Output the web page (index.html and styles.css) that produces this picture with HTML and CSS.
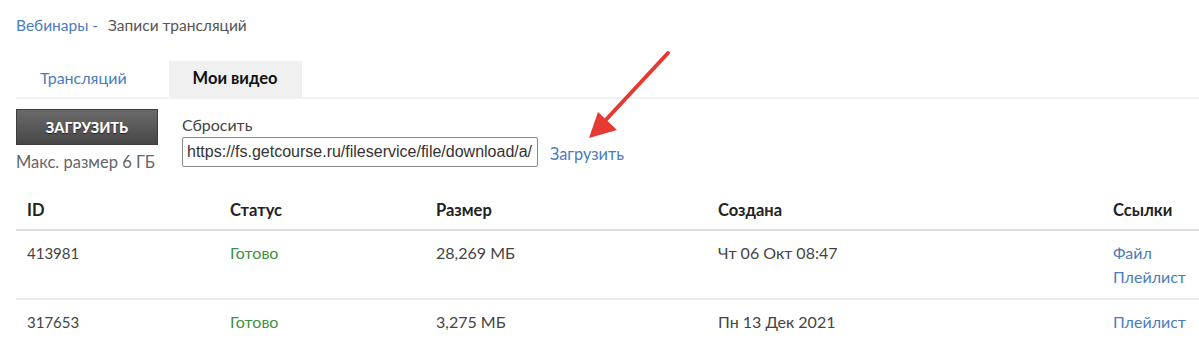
FILE: index.html
```html
<!DOCTYPE html>
<html lang="ru">
<head>
    <meta charset="utf-8">
    <title>Записи трансляций</title>
    <link rel="stylesheet" href="styles.css">
</head>
<body>
    <div class="page">
        <div class="breadcrumbs">
            <a href="#" class="crumb-link">Вебинары</a> <span class="crumb-sep">-</span>
            <span class="crumb-current">Записи трансляций</span>
        </div>

        <div class="tabs">
            <a href="#" class="tab">Трансляций</a>
            <a href="#" class="tab active">Мои видео</a>
        </div>

        <div class="upload-row">
            <div class="upload-box">
                <button class="btn-upload">Загрузить</button>
                <div class="hint">Макс. размер 6 ГБ</div>
            </div>
            <div class="url-box">
                <div class="reset">Сбросить</div>
                <div class="url-line">
                    <input type="text" class="url-input" value="https://fs.getcourse.ru/fileservice/file/download/a/123456/sc/480/h/9f2a1c">
                    <a href="#" class="url-submit">Загрузить</a>
                </div>
            </div>
            <svg class="arrow" width="100" height="100" viewBox="0 0 100 100">
                <line x1="88" y1="4" x2="22" y2="75" stroke="#e53a32" stroke-width="4" stroke-linecap="round"/>
                <polygon points="9,89 18,63 37,81" fill="#e53a32"/>
            </svg>
        </div>

        <table class="videos">
            <thead>
                <tr>
                    <th class="col-id">ID</th>
                    <th class="col-status">Статус</th>
                    <th class="col-size">Размер</th>
                    <th class="col-date">Создана</th>
                    <th class="col-links">Ссылки</th>
                </tr>
            </thead>
            <tbody>
                <tr>
                    <td class="num">413981</td>
                    <td class="ok">Готово</td>
                    <td>28,269 МБ</td>
                    <td>Чт 06 Окт 08:47</td>
                    <td><a href="#">Файл</a><br><a href="#">Плейлист</a></td>
                </tr>
                <tr>
                    <td class="num">317653</td>
                    <td class="ok">Готово</td>
                    <td>3,275 МБ</td>
                    <td>Пн 13 Дек 2021</td>
                    <td><a href="#">Плейлист</a></td>
                </tr>
            </tbody>
        </table>
    </div>
</body>
</html>
```

FILE: styles.css
```css
body {
    margin: 0;
    font-family: Lato, "Open Sans", sans-serif;
    font-size: 16px;
    color: #444;
    background: #fff;
}

a {
    color: #4a7cbd;
    text-decoration: none;
}

.page {
    padding: 14px 0 0 16px;
}

.breadcrumbs {
    height: 22px;
    line-height: 22px;
    font-size: 15.5px;
    color: #555;
}

.crumb-sep {
    color: #4a7cbd;
    margin-right: 6px;
}

.tabs {
    display: flex;
    margin-top: 25px;
    border-bottom: 2px solid #f2f2f2;
}

.tab {
    display: block;
    height: 36px;
    line-height: 34px;
    padding: 0 24px;
    margin-right: 18px;
}

.tab.active {
    background: #f0f0f0;
    color: #111;
    font-weight: bold;
    font-size: 16.5px;
    padding: 0 24px;
}

.upload-row {
    position: relative;
    display: flex;
    margin-top: 10px;
}

.upload-box {
    width: 166px;
}

.btn-upload {
    display: block;
    width: 142px;
    height: 36px;
    border: 1px solid #3c3c3c;
    background: linear-gradient(#6a6a6a, #474747);
    color: #fff;
    font-family: inherit;
    font-size: 14.5px;
    font-weight: 900;
    text-transform: uppercase;
    text-shadow: 0 1px 1px #222;
    padding: 0;
}

.hint {
    margin-top: 7px;
    color: #666;
    font-size: 16.5px;
}

.reset {
    line-height: 20px;
    margin-top: 6px;
}

.url-line {
    display: flex;
    align-items: center;
    margin-top: 2px;
}

.url-input {
    box-sizing: border-box;
    width: 356px;
    height: 30px;
    border: 1px solid #888;
    border-radius: 2px;
    padding: 0 4px;
    font-family: Arimo, "Liberation Sans", sans-serif;
    font-size: 16px;
    color: #333;
}

.url-submit {
    margin-left: 12px;
    margin-top: 3px;
    font-size: 16.3px;
}

.arrow {
    position: absolute;
    left: 564px;
    top: -60px;
}

.videos {
    margin-top: 18px;
    border-collapse: collapse;
    width: 1183px;
    table-layout: fixed;
}

.videos th,
.videos td {
    text-align: left;
    vertical-align: top;
    padding: 10px 11px 9px;
    line-height: 24px;
}

.videos th {
    color: #222;
    font-weight: bold;
    font-size: 16.5px;
    padding: 8px 11px 7px;
    border-bottom: 2px solid #ddd;
}

.videos td {
    border-bottom: 2px solid #ebebeb;
}

.videos tr:last-child td {
    border-bottom: none;
}

.videos td.num {
    font-size: 15px;
}

.col-id { width: 181px; }
.col-status { width: 184px; }
.col-size { width: 260px; }
.col-date { width: 373px; }
.col-links { width: 75px; }

.ok {
    color: #3d9140;
}
```
